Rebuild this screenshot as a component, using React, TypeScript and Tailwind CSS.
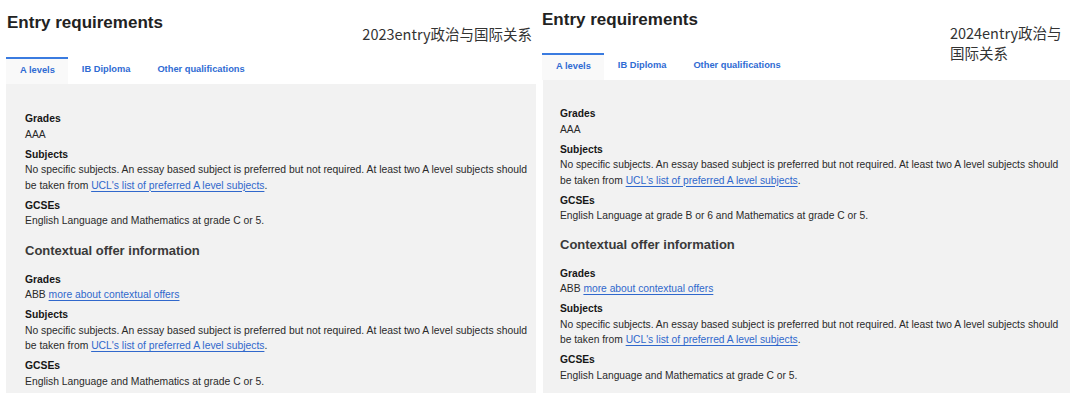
import React from 'react';

const Link = ({ children }: { children: React.ReactNode }) => (
  <a href="#" className="text-[#3068cc] underline underline-offset-[1.5px] decoration-[#3068cc]">
    {children}
  </a>
);

const subjectsText = (
  <>
    No specific subjects. An essay based subject is preferred but not required. At least two A level subjects should
    <br />
    be taken from <Link>UCL's list of preferred A level subjects</Link>.
  </>
);

const Item = ({ label, children }: { label: string; children: React.ReactNode }) => (
  <div className="mb-[4.5px]">
    <div className="font-bold text-[#161616]">{label}</div>
    <div className="text-[#2a2a2a]">{children}</div>
  </div>
);

const Tabs = ({ right }: { right?: boolean }) => (
  <div className={`flex h-[27px] text-[9.3px] font-bold text-[#2f6bd3] ${right ? 'pl-[2px]' : 'pl-[6px]'}`}>
    <div className="flex items-center border-t-2 border-[#3a7be0] bg-[#f9f9f9] pl-[14px] pr-[13px] pb-[1px]">
      A levels
    </div>
    <div className="flex items-center px-[14px] pr-[13px] pb-[1px]">IB Diploma</div>
    <div className="flex items-center px-[14px] pb-[1px]">Other qualifications</div>
  </div>
);

const Panel = ({ right }: { right?: boolean }) => {
  const zh = right ? (
    <>
      2024entry政治与
      <br />
      国际关系
    </>
  ) : (
    '2023entry政治与国际关系'
  );

  return (
    <div className={right ? 'w-[538px]' : 'w-[540px]'}>
      <div className={`flex ${right ? 'h-[53px]' : 'h-[57px]'}`}>
        <h2
          className={`text-[17px] leading-[20px] font-bold text-[#222] ${right ? 'pl-[2px] pt-[10px]' : 'pl-[7px] pt-[13px]'}`}
        >
          Entry requirements
        </h2>
        <div
          className={`text-[14.5px] text-[#333] [font-family:'Noto_Sans_CJK_SC',sans-serif] ${
            right ? 'ml-[252px] pt-[23px] leading-[20px]' : 'ml-auto mr-[8px] pt-[25px] leading-[18.5px]'
          }`}
        >
          {zh}
        </div>
      </div>

      <Tabs right={right} />

      <div
        className={`bg-[#f2f2f2] leading-[15.5px] ${
          right
            ? 'ml-[3px] w-[527px] pl-[17px] pt-[26px] pb-[7px] text-[10.27px]'
            : 'ml-[6px] w-[530px] pl-[19px] pt-[27px] pb-[20px] text-[10.35px]'
        }`}
      >
        <Item label="Grades">AAA</Item>
        <Item label="Subjects">{subjectsText}</Item>
        <Item label="GCSEs">
          {right
            ? 'English Language at grade B or 6 and Mathematics at grade C or 5.'
            : 'English Language and Mathematics at grade C or 5.'}
        </Item>

        <h3
          className={`mb-[12px] text-[13px] leading-[18px] font-bold text-[#3a3a3a] ${right ? 'mt-[12px]' : 'mt-[13px]'}`}
        >
          Contextual offer information
        </h3>

        <Item label="Grades">
          ABB <Link>more about contextual offers</Link>
        </Item>
        <Item label="Subjects">{subjectsText}</Item>
        <Item label="GCSEs">English Language and Mathematics at grade C or 5.</Item>
      </div>
    </div>
  );
};

export default function App() {
  return (
    <div className="flex h-[393px] w-[1078px] overflow-hidden bg-white [font-family:'Liberation_Sans',Arial,sans-serif]">
      <Panel />
      <Panel right />
    </div>
  );
}
